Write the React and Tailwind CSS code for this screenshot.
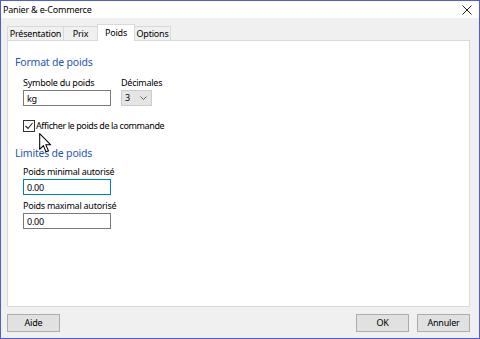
import React from "react";

const font = { fontFamily: '"Noto Sans", "Open Sans", sans-serif' };

function Tab({ label, selected, w }) {
  if (selected) {
    return (
      <div
        className="h-[17px] bg-white border border-b-0 border-[#d9d9d9] flex items-start justify-center pt-[1px] text-[9px] tracking-[-0.2px] text-black leading-[13px] relative z-10"
        style={{ width: w }}
      >
        {label}
      </div>
    );
  }
  return (
    <div
      className="h-[15px] bg-[#f0f0f0] border border-[#d9d9d9] -ml-px first:ml-0 flex items-start justify-center pt-[1px] text-[9px] tracking-[-0.2px] text-black leading-[12px]"
      style={{ width: w }}
    >
      {label}
    </div>
  );
}

function Label({ children, className = "" }) {
  return (
    <div className={`h-[14px] leading-[14px] text-[9px] tracking-[-0.25px] text-black ${className}`}>
      {children}
    </div>
  );
}

function Input({ value, focused }) {
  return (
    <div
      className={`w-[88px] h-[16px] bg-white border ${focused ? "border-[#0078d7]" : "border-[#7a7a7a]"} flex items-center pl-[3px] text-[9px] tracking-[-0.25px] text-black leading-none`}
    >
      {value}
    </div>
  );
}

function Button({ children, className = "" }) {
  return (
    <div
      className={`w-[53px] h-[18px] bg-[#e1e1e1] border border-[#adadad] flex items-center justify-center text-[9px] tracking-[-0.2px] text-black ${className}`}
    >
      {children}
    </div>
  );
}

export default function App() {
  return (
    <div
      className="w-[480px] h-[339px] border border-[#4d5fd6] bg-[#f0f0f0] flex flex-col relative overflow-hidden"
      style={font}
    >
      {/* Title bar */}
      <div className="h-[17px] bg-white flex items-center justify-between pl-[2px] pr-[6px]">
        <span className="text-[9px] tracking-[-0.2px] text-black leading-none">
          Panier &amp; e-Commerce
        </span>
        <svg width="10" height="10" viewBox="0 0 10 10" className="mr-[1px]">
          <path d="M0.5 0.5 L9.5 9.5 M9.5 0.5 L0.5 9.5" stroke="#222" strokeWidth="1" />
        </svg>
      </div>

      {/* Body */}
      <div className="flex-1 flex flex-col pl-[6px] pr-[9px] pt-[6px]">
        {/* Tabs */}
        <div className="flex items-end h-[17px] -mb-px">
          <Tab label="Présentation" w={57} />
          <Tab label="Prix" w={35} />
          <div className="-ml-px">
            <Tab label="Poids" selected w={38} />
          </div>
          <div className="-ml-px">
            <Tab label="Options" w={37} />
          </div>
        </div>

        {/* Panel */}
        <div className="h-[267px] bg-white border border-[#d9d9d9] flex flex-col pl-[7px] pt-[13px]">
          <div className="h-[17px] leading-[17px] text-[10.5px] tracking-[-0.2px] text-[#1e56b4]">
            Format de poids
          </div>
          <div className="flex gap-[10px] pl-[8px] mt-[5px]">
            <div className="flex flex-col">
              <Label>Symbole du poids</Label>
              <Input value="kg" />
            </div>
            <div className="flex flex-col">
              <Label>Décimales</Label>
              <div className="w-[31px] h-[16px] bg-[#e5e5e5] border border-[#cccccc] flex items-center justify-between pl-[3px] pr-[4px] text-[9px] text-black">
                <span>3</span>
                <svg width="7" height="4" viewBox="0 0 7 4">
                  <path d="M0.5 0.5 L3.5 3.5 L6.5 0.5" fill="none" stroke="#555" strokeWidth="0.9" />
                </svg>
              </div>
            </div>
          </div>
          <div className="flex items-center pl-[8px] mt-[13px] h-[13px]">
            <div className="w-[12px] h-[12px] border border-[#333] bg-white flex items-center justify-center">
              <svg width="10" height="10" viewBox="0 0 10 10">
                <path d="M1.5 5 L4 7.5 L8.5 2" fill="none" stroke="#222" strokeWidth="1.1" />
              </svg>
            </div>
            <span className="ml-[1px] text-[9px] tracking-[-0.4px] text-black leading-none">
              Afficher le poids de la commande
            </span>
          </div>
          <div className="h-[17px] leading-[17px] text-[10.5px] tracking-[-0.2px] text-[#1e56b4] mt-[13px]">
            Limites de poids
          </div>
          <div className="flex flex-col pl-[8px] mt-[3px]">
            <Label>Poids minimal autorisé</Label>
            <Input value="0.00" focused />
            <Label className="mt-[4px]">Poids maximal autorisé</Label>
            <Input value="0.00" />
          </div>
        </div>

        {/* Buttons */}
        <div className="flex items-center mt-[7px] h-[18px]">
          <Button>Aide</Button>
          <div className="flex-1" />
          <Button>OK</Button>
          <Button className="ml-[8px]">Annuler</Button>
        </div>
      </div>

      {/* Mouse cursor */}
      <svg
        width="14"
        height="21"
        viewBox="0 0 13 20"
        className="absolute left-[38px] top-[132px]"
      >
        <path
          d="M0.5 0.5 L0.5 15.5 L4 12 L6.5 17.8 L8.8 16.8 L6.3 11.2 L11 11.2 Z"
          fill="#fff"
          stroke="#000"
          strokeWidth="1"
          strokeLinejoin="round"
        />
      </svg>
    </div>
  );
}
